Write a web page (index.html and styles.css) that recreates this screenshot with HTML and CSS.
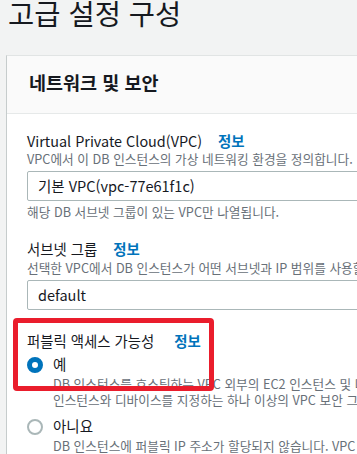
FILE: index.html
```html
<!DOCTYPE html>
<html lang="ko">
<head>
  <meta charset="UTF-8" />
  <meta name="viewport" content="width=device-width, initial-scale=1.0"/>
  <title>고급 설정 구성</title>
  <link rel="stylesheet" href="styles.css">
</head>
<body>
  <h1 class="page-title">고급 설정 구성</h1>

  <div class="card">
    <div class="card-header">
      <h2>네트워크 및 보안</h2>
    </div>

    <div class="card-body">
      <div class="field">
        <div class="label">Virtual Private Cloud(VPC) <a class="info">정보</a></div>
        <div class="desc">VPC에서 이 DB 인스턴스의 가상 네트워킹 환경을 정의합니다.</div>
        <div class="select">기본 VPC(vpc-77e61f1c)</div>
        <div class="hint">해당 DB 서브넷 그룹이 있는 VPC만 나열됩니다.</div>
      </div>

      <div class="field">
        <div class="label">서브넷 그룹 <a class="info">정보</a></div>
        <div class="desc">선택한 VPC에서 DB 인스턴스가 어떤 서브넷과 IP 범위를 사용할 수 있는지 정의하는 DB 서브넷 그룹입니다.</div>
        <div class="select">default</div>
      </div>

      <div class="field public">
        <div class="highlight"></div>
        <div class="label">퍼블릭 액세스 가능성 <a class="info">정보</a></div>

        <div class="radio-option">
          <span class="radio checked"></span>
          <div class="radio-text">
            <div class="radio-title">예</div>
            <div class="desc">DB 인스턴스를 호스팅하는 VPC 외부의 EC2 인스턴스 및 디바이스가 DB 인스턴스에 연결할 수 있습니다. DB 인스턴스에 연결할 수 있는 EC2<br>인스턴스와 디바이스를 지정하는 하나 이상의 VPC 보안 그룹을 선택합니다.</div>
          </div>
        </div>

        <div class="radio-option">
          <span class="radio"></span>
          <div class="radio-text">
            <div class="radio-title">아니요</div>
            <div class="desc">DB 인스턴스에 퍼블릭 IP 주소가 할당되지 않습니다. VPC 외부의 EC2 인스턴스나 디바이스는 연결할 수 없습니다.</div>
          </div>
        </div>
      </div>
    </div>
  </div>
</body>
</html>
```

FILE: styles.css
```css
* {
  margin: 0;
  padding: 0;
  box-sizing: border-box;
}

body {
  background: #f2f3f3;
  font-family: "Noto Sans CJK KR", "Noto Sans", sans-serif;
  color: #16191f;
  overflow: hidden;
  height: 100vh;
}

.page-title {
  font-size: 28.5px;
  font-weight: 400;
  line-height: 30px;
  margin: -2px 0 0 8px;
  height: 57px;
}

.card {
  margin-left: 6px;
  width: 1000px;
  background: #fff;
  border-left: 1px solid #c6cccc;
  border-top: 1px solid #e1e4e4;
}

.card-header {
  background: #fafafa;
  border-bottom: 1px solid #e6e9e9;
  padding: 14px 22px 19px;
}

.card-header h2 {
  font-size: 18.5px;
  font-weight: 700;
  line-height: 24px;
}

.card-body {
  padding: 17px 0 0 20px;
}

.field {
  margin-bottom: 19px;
}

.field + .field {
  margin-bottom: 21px;
}

.label {
  font-size: 14.4px;
  line-height: 20px;
  white-space: nowrap;
}

.info {
  color: #0073bb;
  font-weight: 700;
  margin-left: 12px;
}

.public .info {
  margin-left: 16px;
}

.desc, .hint {
  font-size: 12.7px;
  line-height: 16px;
  color: #687078;
  white-space: nowrap;
}

.field + .field .desc {
  margin-top: 1px;
}

.select {
  margin-top: 4px;
  height: 30px;
  border: 1px solid #aab7b8;
  border-radius: 2px;
  padding: 0 10px;
  font-size: 14.5px;
  line-height: 28px;
}

.hint {
  margin-top: 3px;
}

.public {
  position: relative;
}

.highlight {
  position: absolute;
  left: -14px;
  top: -13px;
  width: 201px;
  height: 73px;
  border: 5px solid #ea1d2c;
  border-radius: 4px;
}

.radio-option {
  display: flex;
  gap: 10px;
  margin-top: 3px;
}

.radio-option + .radio-option {
  margin-top: 8px;
}

.radio {
  flex: none;
  width: 16px;
  height: 16px;
  margin-top: 3px;
  border-radius: 50%;
  border: 2px solid #aab7b8;
  background: #fff;
}

.radio.checked {
  border: 5px solid #0073bb;
}

.radio-title {
  font-size: 14.5px;
  line-height: 20px;
  margin-bottom: 2px;
}
```
